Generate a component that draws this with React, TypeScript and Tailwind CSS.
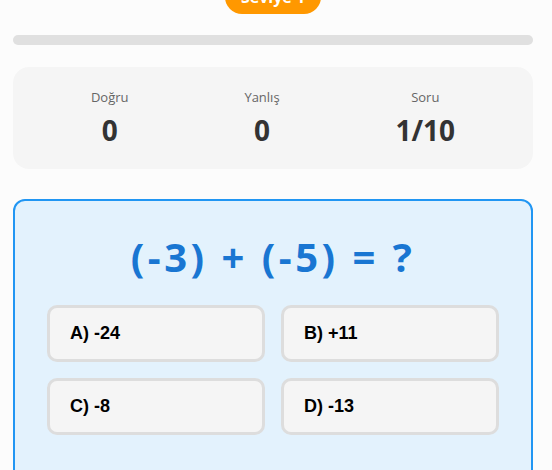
import React from 'react';

const stats = [
  { label: 'Doğru', value: '0' },
  { label: 'Yanlış', value: '0' },
  { label: 'Soru', value: '1/10' },
];

const options = ['A) -24', 'B) +11', 'C) -8', 'D) -13'];

export default function App() {
  return (
    <div className="h-[470px] w-full overflow-hidden bg-[#fcfcfc] font-['Open_Sans',sans-serif]">
      <div className="-mt-[20px] pl-[13px] pr-[19px]">
        {/* Level badge */}
        <div className="flex justify-center">
          <span className="rounded-full bg-[#ff9800] px-[16px] py-[7px] text-[16px] leading-[20px] font-bold text-white">
            Seviye 1
          </span>
        </div>

        {/* Progress */}
        <div className="mt-[21px] h-[10px] w-full rounded-full bg-[#e0e0e0]" />

        {/* Stats */}
        <div className="mt-[22px] flex h-[102px] items-center justify-around rounded-[16px] bg-[#f5f5f5] px-5">
          {stats.map((s) => (
            <div key={s.label} className="flex flex-col items-center">
              <span className="text-[13px] leading-[18px] text-[#666]">{s.label}</span>
              <span className="mt-[6px] text-[28px] leading-[36px] font-bold text-[#333]">{s.value}</span>
            </div>
          ))}
        </div>

        {/* Question card */}
        <div className="mt-[30px] rounded-[12px] border-2 border-[#2196f3] bg-[#e3f2fd] p-8 pb-16">
          <div className="mb-6 text-center text-[40px] leading-[48px] font-bold tracking-[3.5px] text-[#1976d2]">
            (-3) + (-5) = ?
          </div>
          <div className="grid grid-cols-2 gap-4">
            {options.map((o) => (
              <button
                key={o}
                className="rounded-[10px] border-[3px] border-[#ddd] bg-[#f5f5f5] px-5 py-[15px] text-left font-['Liberation_Sans',Arial,sans-serif] text-[18px] leading-[21px] font-bold text-black"
              >
                {o}
              </button>
            ))}
          </div>
        </div>
      </div>
    </div>
  );
}
